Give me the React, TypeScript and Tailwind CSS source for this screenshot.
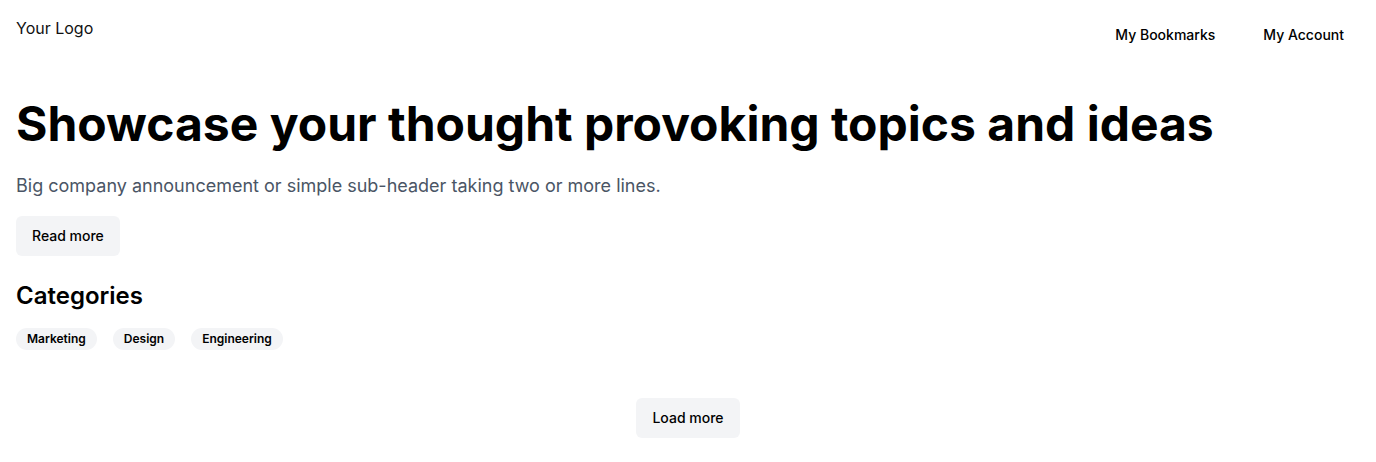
import React from "react";

const categories = ["Marketing", "Design", "Engineering"];

export default function App() {
    return (
        <div className="min-h-screen bg-white text-black font-['Inter',sans-serif]">
            {/* Header */}
            <header className="flex items-start justify-between px-4 pt-4">
                <a href="#" className="text-base leading-6 text-[#111]">Your Logo</a>
                <nav className="flex gap-4">
                    <button className="px-4 pt-[9px] pb-[7px] text-sm font-medium leading-5">My Bookmarks</button>
                    <button className="px-4 pt-[9px] pb-[7px] text-sm font-medium leading-5">My Account</button>
                </nav>
            </header>

            <main className="px-4">
                {/* Hero */}
                <h1 className="mt-12 text-5xl leading-none font-bold">
                    Showcase your thought provoking topics and ideas
                </h1>
                <p className="mt-6 text-lg leading-7 text-gray-600">
                    Big company announcement or simple sub-header taking two or more lines.
                </p>
                <button className="mt-4 h-10 px-4 rounded-md bg-gray-100 text-sm font-medium">
                    Read more
                </button>

                {/* Categories */}
                <h2 className="mt-6 text-2xl leading-8 font-semibold">Categories</h2>
                <div className="mt-4 flex gap-4">
                    {categories.map((c) => (
                        <span
                            key={c}
                            className="px-[11px] py-[3px] rounded-full bg-gray-100 text-xs leading-4 font-semibold"
                        >
                            {c}
                        </span>
                    ))}
                </div>

                <div className="mt-12 flex justify-center">
                    <button className="h-10 px-4 rounded-md bg-gray-100 text-sm font-medium">
                        Load more
                    </button>
                </div>
            </main>
        </div>
    );
}
